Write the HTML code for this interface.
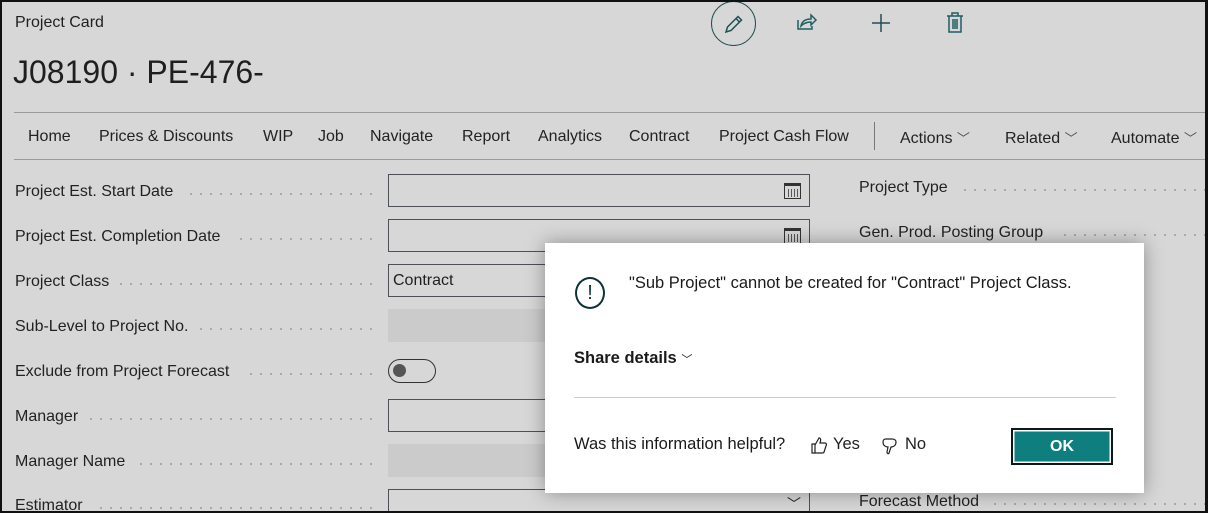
<!DOCTYPE html>
<html><head><style>
*{margin:0;padding:0;box-sizing:border-box}
html{width:1208px;height:513px;overflow:hidden}
body{width:1208px;height:513px;overflow:hidden;background:#d7d7d7;font-family:"Liberation Sans",sans-serif;color:#1f1f1f;position:relative}
.frame{position:absolute;left:0;top:0;width:1208px;height:513px;border:2px solid #111;border-right-width:3px;z-index:20;pointer-events:none}
.abs{position:absolute;white-space:nowrap}
.lbl{font-size:16px;color:#222}
.dots{position:absolute;height:2px;background-image:radial-gradient(circle,#9a9a9a 0.8px,transparent 1px);background-size:10px 2px}
.inp{position:absolute;left:388px;width:422px;height:33px;border:1.5px solid #4d5157;background:#d7d7d7}
.ro{position:absolute;left:388px;width:422px;height:33px;background:#cbcbcb}
.tab{font-size:16px;color:#222;top:128px}
.cal{position:absolute;right:8px;top:8px;width:17px;height:16px;border:1.5px solid #333;border-top-width:3px;background:repeating-linear-gradient(90deg,#555 0 1px,transparent 1px 3px);background-clip:content-box;padding:3px 2px 1px}
</style></head><body>
<div class="frame"></div>
<div class="abs" style="left:15px;top:14px;font-size:16px">Project Card</div>
<div class="abs" style="left:13px;top:54px;font-size:32px;font-weight:300">J08190 · PE-476-</div>
<div class="abs" style="left:711px;top:1px;width:45px;height:45px;border:1.5px solid #1f4f52;border-radius:50%"></div>
<svg class="abs" style="left:722px;top:12px" width="24" height="24" viewBox="0 0 24 24"><path d="M4 20l1.5-5L16 4.5l3.5 3.5L9 18.5z M14 6.5l3.5 3.5" fill="none" stroke="#1f4f52" stroke-width="1.5"/></svg>
<svg class="abs" style="left:796px;top:12px" width="22" height="20" viewBox="0 0 22 20"><path d="M2 8v9h14v-3 M5 14c1-5 5-7 10-7V3l5 5-5 5V10c-4 0-7 1-10 4z" fill="none" stroke="#1f5f62" stroke-width="1.5"/></svg>
<svg class="abs" style="left:871px;top:13px" width="20" height="20"><path d="M10 1v18M1 10h18" stroke="#1f4f52" stroke-width="1.5"/></svg>
<svg class="abs" style="left:946px;top:12px" width="18" height="22" viewBox="0 0 18 22"><path d="M1 4h16 M6 4V1h6v3 M3 4v16h12V4 M7 7v10M9 7v10M11 7v10" fill="none" stroke="#1f5f62" stroke-width="1.5"/></svg>
<div class="abs" style="left:14px;top:112px;width:1194px;height:1px;background:#9a9a9a"></div>
<div class="abs" style="left:14px;top:159px;width:1194px;height:1px;background:#9a9a9a"></div>
<div class="abs" style="left:874px;top:122px;width:1px;height:28px;background:#777"></div>
<div class="abs tab" style="left:28px">Home</div>
<div class="abs tab" style="left:99px">Prices &amp; Discounts</div>
<div class="abs tab" style="left:263px">WIP</div>
<div class="abs tab" style="left:318px">Job</div>
<div class="abs tab" style="left:370px">Navigate</div>
<div class="abs tab" style="left:462px">Report</div>
<div class="abs tab" style="left:538px">Analytics</div>
<div class="abs tab" style="left:629px">Contract</div>
<div class="abs tab" style="left:719px">Project Cash Flow</div>
<div class="abs tab" style="left:900px">Actions <span style="font-size:13px;color:#555">﹀</span></div>
<div class="abs tab" style="left:1005px">Related <span style="font-size:13px;color:#555">﹀</span></div>
<div class="abs tab" style="left:1111px">Automate <span style="font-size:13px;color:#555">﹀</span></div>
<div class="abs lbl" style="left:15px;top:183px">Project Est. Start Date</div><div class="dots" style="left:186px;top:193px;width:190px"></div>
<div class="inp" style="top:174px"><div class="cal"></div></div>
<div class="abs lbl" style="left:15px;top:228px">Project Est. Completion Date</div><div class="dots" style="left:236px;top:238px;width:140px"></div>
<div class="inp" style="top:219px"><div class="cal"></div></div>
<div class="abs lbl" style="left:15px;top:273px">Project Class</div><div class="dots" style="left:116px;top:283px;width:260px"></div>
<div class="inp" style="top:264px"><span style="position:absolute;left:4px;top:7px;font-size:16px">Contract</span></div>
<div class="abs lbl" style="left:15px;top:318px">Sub-Level to Project No.</div><div class="dots" style="left:196px;top:328px;width:180px"></div>
<div class="ro" style="top:309px"></div>
<div class="abs lbl" style="left:15px;top:363px">Exclude from Project Forecast</div><div class="dots" style="left:246px;top:373px;width:130px"></div>
<div class="abs" style="left:388px;top:359px;width:48px;height:24px;border:1.5px solid #333;border-radius:12px"><div style="position:absolute;left:4px;top:4px;width:13px;height:13px;border-radius:50%;background:#555"></div></div>
<div class="abs lbl" style="left:15px;top:408px">Manager</div><div class="dots" style="left:86px;top:418px;width:290px"></div>
<div class="inp" style="top:399px"></div>
<div class="abs lbl" style="left:15px;top:453px">Manager Name</div><div class="dots" style="left:136px;top:463px;width:240px"></div>
<div class="ro" style="top:444px"></div>
<div class="abs lbl" style="left:15px;top:497px">Estimator</div><div class="dots" style="left:96px;top:507px;width:280px"></div>
<div class="inp" style="top:489px;height:24px"><span style="position:absolute;right:8px;top:4px;font-size:14px">﹀</span></div>
<div class="abs lbl" style="left:859px;top:179px">Project Type</div><div class="dots" style="left:960px;top:189px;width:248px"></div>
<div class="abs lbl" style="left:859px;top:224px">Gen. Prod. Posting Group</div><div class="dots" style="left:1060px;top:234px;width:148px"></div>
<div class="abs lbl" style="left:859px;top:493px">Forecast Method</div><div class="dots" style="left:990px;top:503px;width:218px"></div>
<div class="abs" style="left:545px;top:243px;width:599px;height:250px;background:#fff;box-shadow:0 0 18px rgba(0,0,0,0.35)">
 <div class="abs" style="left:30px;top:34px;width:30px;height:32px;border:2px solid #0c3336;border-radius:50%;text-align:center;font-size:20px;line-height:28px;color:#0c3336">!</div>
 <div class="abs" style="left:84px;top:31px;font-size:16.5px;color:#1a1a1a">"Sub Project" cannot be created for "Contract" Project Class.</div>
 <div class="abs" style="left:29px;top:106px;font-size:16.5px;font-weight:bold;color:#1a1a1a">Share details <span style="font-size:11px;font-weight:normal">﹀</span></div>
 <div class="abs" style="left:29px;top:154px;width:542px;height:1px;background:#ccc"></div>
 <div class="abs" style="left:29px;top:192px;font-size:16.5px;color:#1a1a1a">Was this information helpful?</div>
 <svg class="abs" style="left:266px;top:193px" width="16" height="18" viewBox="0 0 16 18"><path d="M1 8h3v9H1z M4 9l4-7c2 0 2 2 1 5h5c1 0 2 1 1 3l-2 6c0 1-1 1-2 1H4" fill="none" stroke="#222" stroke-width="1.2"/></svg>
 <div class="abs" style="left:288px;top:192px;font-size:16.5px">Yes</div>
 <svg class="abs" style="left:337px;top:194px" width="16" height="18" viewBox="0 0 16 18"><path d="M4 2c-2 0-3 1-3 3 0 3 2 5 5 5l-1 5c0 2 2 2 2 1l2-6c3 0 5-2 5-5 0-2-2-3-4-3z" fill="none" stroke="#222" stroke-width="1.2"/></svg>
 <div class="abs" style="left:360px;top:192px;font-size:16.5px">No</div>
 <div class="abs" style="left:466px;top:185px;width:102px;height:37px;background:#0e7f7e;border:2px solid #0a1a1a;box-shadow:inset 0 0 0 1.5px #fff;color:#fff;font-weight:bold;font-size:16px;text-align:center;line-height:33px">OK</div>
</div>
</body></html>
